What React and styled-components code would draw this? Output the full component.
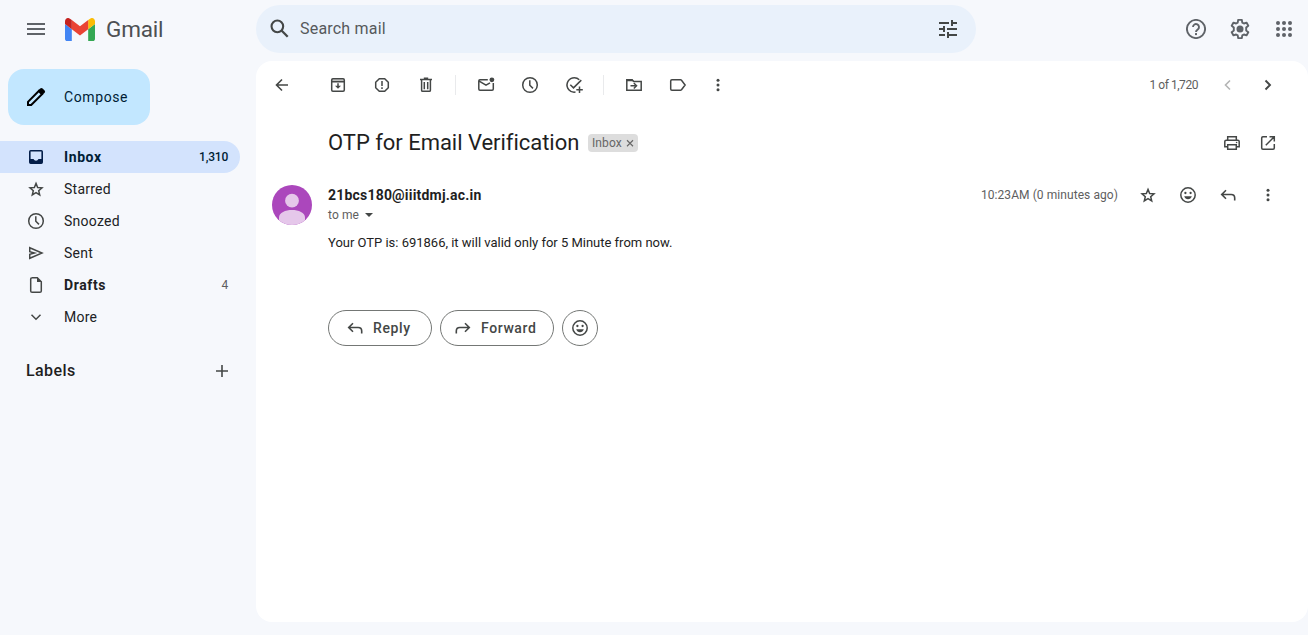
import React from "react";
import styled, { createGlobalStyle } from "styled-components";

const Global = createGlobalStyle`
  *, *::before, *::after { box-sizing: border-box; }
  body { margin: 0; background: #f6f8fc; font-family: Roboto, "Liberation Sans", sans-serif; color: #1f1f1f; overflow: hidden; }
  button { font: inherit; color: inherit; background: none; border: 0; padding: 0; margin: 0; }
  h1, p { margin: 0; font-weight: 400; }
`;

const Page = styled.div`
  display: grid;
  grid-template: 61px 561px 13px / 256px 1fr;
  width: 1308px;
  height: 635px;
`;

const Header = styled.header`
  grid-column: 1 / 3;
  display: flex;
  align-items: center;
  height: 58px;
`;

const Brand = styled.div`
  width: 256px;
  padding-left: 24px;
  display: flex;
  align-items: center;
`;

const BrandName = styled.span`
  margin-left: 11px;
  font-size: 22.5px;
  line-height: 28px;
  letter-spacing: -0.2px;
  color: #4d5053;
`;

const LogoSvg = styled.svg`
  display: block;
  margin-left: 17px;
`;

const Search = styled.div`
  width: 720px;
  height: 48px;
  padding: 0 16px 0 12px;
  border-radius: 24px;
  background: #e9f1fb;
  display: flex;
  align-items: center;
`;

const SearchText = styled.span`
  flex: 1;
  margin-left: 8px;
  padding-bottom: 1px;
  font-size: 16px;
  letter-spacing: 0.2px;
  color: #56595c;
`;

const HeaderActions = styled.div`
  margin-left: auto;
  padding-right: 12px;
  display: flex;
  gap: 20px;
`;

const IconButton = styled.button`
  flex: none;
  display: flex;
  align-items: center;
  justify-content: center;
  width: ${(p) => p.$size || 20}px;
  height: ${(p) => p.$size || 20}px;
  color: ${(p) => p.$color || "#444746"};
`;

const IconSvg = styled.svg`
  display: block;
  flex: none;
  fill: none;
  stroke: currentColor;
`;

const Sidebar = styled.aside`
  padding-top: 8px;
`;

const Compose = styled.button`
  display: flex;
  align-items: center;
  width: 142px;
  height: 56px;
  margin-left: 8px;
  padding-left: 16px;
  gap: 16px;
  border-radius: 16px;
  background: #c2e7ff;
  color: #001d35;
  font-size: 14px;
  font-weight: 400;
  letter-spacing: 0.6px;
`;

const Nav = styled.nav`
  margin-top: 16px;
  width: 240px;
`;

const NavItem = styled.div`
  display: flex;
  align-items: center;
  height: 32px;
  padding: 0 12px 0 26px;
  border-radius: 0 16px 16px 0;
  background: ${(p) => (p.$active ? "#d3e3fd" : "transparent")};
  color: ${(p) => (p.$active ? "#001d35" : "#202124")};
  font-size: 14px;
  font-weight: ${(p) => (p.$bold ? 700 : 400)};
`;

const NavLabel = styled.span`
  flex: 1;
  margin-left: 18px;
  letter-spacing: ${(p) => (p.$bold ? 0.6 : 0.25)}px;
`;

const NavCount = styled.span`
  font-size: 12px;
  font-weight: ${(p) => (p.$active ? 500 : 400)};
  letter-spacing: -0.2px;
  color: ${(p) => (p.$active ? "#001d35" : "#5e5e5e")};
`;

const LabelsHead = styled.div`
  display: flex;
  align-items: center;
  justify-content: space-between;
  width: 232px;
  margin-top: 26px;
  height: 24px;
  padding-left: 26px;
  font-size: 16px;
  font-weight: 500;
  letter-spacing: 0.4px;
`;

const LabelsTitle = styled.span`
  padding-bottom: 1px;
`;

const Panel = styled.main`
  background: #fff;
  border-radius: 16px;
`;

const Toolbar = styled.div`
  display: flex;
  align-items: center;
  height: 48px;
  padding: 0 30px 0 16px;
`;

const ToolGroup = styled.div`
  display: flex;
  gap: 24px;
  margin-left: ${(p) => p.$left || 0}px;
`;

const Separator = styled.i`
  width: 1px;
  height: 20px;
  margin: 0 20px 0 19px;
  background: #e9eaec;
`;

const Pager = styled.div`
  display: flex;
  align-items: center;
  gap: 20px;
  margin-left: auto;
  font-size: 12px;
  letter-spacing: -0.45px;
  color: #5e5e5e;
`;

const SubjectRow = styled.div`
  display: flex;
  align-items: center;
  height: 36px;
  margin-top: 16px;
  padding: 0 30px 0 72px;
`;

const Subject = styled.h1`
  width: 250px;
  font-size: 22px;
  line-height: 28px;
  letter-spacing: -0.03px;
  white-space: nowrap;
`;

const Chip = styled.span`
  display: flex;
  align-items: center;
  justify-content: space-between;
  width: 50px;
  height: 18px;
  margin-left: 10px;
  padding: 0 3px 0 4px;
  border-radius: 4px;
  background: #ddd;
  color: #666;
  font-size: 12px;
  letter-spacing: 0.1px;
`;

const RowActions = styled.div`
  display: flex;
  gap: ${(p) => p.$gap}px;
  margin-left: ${(p) => (p.$left ? `${p.$left}px` : "auto")};
`;

const Message = styled.section`
  display: flex;
  padding: 24px 30px 0 16px;
`;

const AvatarSvg = styled.svg`
  display: block;
  flex: none;
`;

const MessageMain = styled.div`
  flex: 1;
  margin-left: 16px;
`;

const SenderRow = styled.div`
  display: flex;
  align-items: center;
  height: 20px;
`;

const Sender = styled.span`
  font-size: 14px;
  font-weight: 700;
  letter-spacing: 0.2px;
`;

const SentAt = styled.span`
  margin-left: auto;
  font-size: 12px;
  letter-spacing: 0.07px;
  color: #5e5e5e;
`;

const Recipient = styled.div`
  display: flex;
  align-items: center;
  gap: 6px;
  height: 20px;
  font-size: 12px;
  letter-spacing: 0.1px;
  color: #5e5e5e;
`;

const Body = styled.p`
  margin-top: 8px;
  font-size: 13px;
  line-height: 20px;
  letter-spacing: -0.01px;
  color: #222;
`;

const Replies = styled.div`
  display: flex;
  gap: 8px;
  margin-top: 57px;
`;

const Pill = styled.button`
  display: flex;
  align-items: center;
  justify-content: ${(p) => (p.$round ? "center" : "flex-start")};
  gap: 8px;
  width: ${(p) => p.$width}px;
  height: 36px;
  padding-left: ${(p) => p.$pad || 0}px;
  border: 1px solid #747775;
  border-radius: 18px;
  color: #444746;
  font-size: 14px;
  font-weight: 500;
  letter-spacing: 0.6px;
`;

const dots = (points, r) =>
  points.map(([x, y]) => <circle key={`${x}-${y}`} cx={x} cy={y} r={r} fill="currentColor" stroke="none" />);

const clock = (
  <>
    <circle cx="10" cy="10" r="7.3" />
    <path d="M9.8 5.2V10.200L13 13.400" />
  </>
);

const smile = (
  <>
    <circle cx="10" cy="10" r="7.2" />
    {dots([[7.4, 8], [12.6, 8]], 1.15)}
    <path d="M6.200 11.300h7.600c-.6 1.900-2 2.900-3.800 2.900s-3.200-1-3.800-2.900z" fill="currentColor" stroke="none" />
  </>
);

const glyphs = {
  menu: <path d="M2.500 5.830h15M2.500 10h15M2.500 14.170h15" strokeWidth="1.670" />,
  search: (
    <>
      <circle cx="7.600" cy="7.600" r="5.300" strokeWidth="1.900" />
      <path d="M11.400 11.400L17 17" strokeWidth="2.100" />
    </>
  ),
  tune: <path d="M1 4h10M13 4h6M14 1v6M1 10h5M9 10h10M6 7v6M1 16h6M9 16h10M10 13v6" strokeWidth="2" />,
  help: (
    <>
      <circle cx="10" cy="10" r="9.100" strokeWidth="1.900" />
      <path d="M7 8a3 3 0 1 1 4.800 2.400C10.600 11.300 10 11.700 10 13" strokeWidth="1.900" />
      <rect x="9" y="14.100" width="2" height="2" fill="currentColor" stroke="none" />
    </>
  ),
  gear: (
    <>
      <path
        d="M8.200.9h3.600l.5 2.700 1.600.9 2.600-.9 1.800 3.100-2.100 1.800v3l2.100 1.800-1.800 3.100-2.600-.9-1.600.9-.5 2.700H8.200l-.5-2.700-1.600-.9-2.600.9-1.800-3.100 2.100-1.800v-3L1.700 6.700l1.800-3.100 2.600.9 1.600-.9z"
        strokeWidth="1.900"
        strokeLinejoin="round"
      />
      <circle cx="10" cy="10" r="3.500" fill="currentColor" stroke="none" />
    </>
  ),
  apps: dots([4, 10, 16].flatMap((y) => [4, 10, 16].map((x) => [x, y])), 2),
  pencil: (
    <>
      <path d="M2 18v-3.200L12.800 4l3.200 3.200L5.200 18z" strokeWidth="2" />
      <path d="M12 3.600L14.200 1.400q1.200-1 2.400 0l2 2q1 1.200 0 2.400L16.400 8z" fill="currentColor" stroke="none" />
    </>
  ),
  inbox: (
    <path
      d="M4.700 3h10.600Q17 3 17 4.700v10.600q0 1.700-1.700 1.700H4.700Q3 17 3 15.300V4.700Q3 3 4.700 3zM4.600 4.600v7.400H7.500q.8 1.800 2.500 1.800t2.500-1.800h2.900V4.600z"
      fill="currentColor"
      fillRule="evenodd"
      stroke="none"
    />
  ),
  star: <path d="M10 4.400l1.650 4.050 4.350.35-3.300 2.850 1 4.250L10 13.650 6.300 15.900l1-4.250L4 8.800l4.350-.35z" strokeWidth="1.500" />,
  clock,
  send: <path d="M3.750 4.700L16 10 3.750 15.300V11.300L8.500 10 3.750 8.700z" />,
  file: (
    <>
      <path d="M5.600 2.700h5.700l4 4v9.200q0 1.400-1.400 1.400H6.100q-1.400 0-1.400-1.400V4.100q0-1.400 1.400-1.400z" />
      <path d="M11 2.500v4.500h4.700z" fill="currentColor" stroke="none" />
    </>
  ),
  down: <path d="M5.500 7.800l4.500 4.500 4.500-4.500" />,
  plus: <path d="M10 4v12M4 10h12" strokeWidth="1.600" />,
  back: <path d="M16 10H5M10 4.500L4.500 10l5.500 5.500" strokeWidth="1.600" />,
  archive: (
    <>
      <path d="M3.700 6.200v8.900q0 1.200 1.200 1.200h10.200q1.200 0 1.200-1.200V6.200M3.700 6.700V4.900q0-1.200 1.200-1.200h10.200q1.200 0 1.200 1.200v1.800z" />
      <path d="M4 4.500h12v2H4z" fill="currentColor" fillOpacity=".35" stroke="none" />
      <path d="M10 8.300v3" />
      <path d="M7 10.700h6L10 13.700z" fill="currentColor" stroke="none" />
    </>
  ),
  report: (
    <>
      <path d="M7.300 3.700h5.400l3.600 3.600v5.400l-3.600 3.600H7.300l-3.600-3.600V7.300z" />
      <path d="M10 6v5M10 12.300v1.700" />
    </>
  ),
  trash: (
    <>
      <path d="M4 4.500h12M7.800 3.300h4.400M5.600 5v10.200q0 1.100 1.100 1.100h6.600q1.100 0 1.100-1.100V5" />
      <path d="M8.300 7v7.200M11.700 7v7.200" />
    </>
  ),
  unread: (
    <>
      <path d="M11.800 4.800H3.900q-1.100 0-1.100 1.100v8.200q0 1.200 1.200 1.200h12.100q1.200 0 1.200-1.200V8M3.200 6.200L10 10.200l4-2.400" />
      <circle cx="15.900" cy="4.800" r="2.400" fill="currentColor" stroke="none" />
    </>
  ),
  task: <path d="M15.300 4.800A7.200 7.200 0 1 0 11.500 17M6.300 9.700l3.200 3.200L17.300 5.100M15.500 11.500v6.500M12.300 14.700h6.500" />,
  move: (
    <>
      <path d="M2.800 15.300V4.800h5.200l1.700 1.700h7.500v8.800z" />
      <path d="M2.500 4h5.600l2 2.200H2.500z" fill="currentColor" stroke="none" />
      <path d="M6.500 10.800h5M9.800 8l2.800 2.800-2.800 2.800" strokeWidth="1.400" />
    </>
  ),
  label: <path d="M3.900 4.800h8.600q.6 0 1 .5l3.600 4.700-3.600 4.700q-.4.600-1 .6H3.900q-1.200 0-1.200-1.200V6q0-1.200 1.200-1.200z" />,
  more: dots([[10, 5.300], [10, 10], [10, 14.700]], 1.500),
  left: <path d="M12 5.500L7.500 10l4.500 4.500" strokeWidth="1.600" />,
  right: <path d="M7.500 5.500L12 10l-4.500 4.500" strokeWidth="1.900" />,
  print: (
    <>
      <path d="M5.700 7V3.700h8.600V7M5.700 13.700H2.800V8.600q0-1.400 1.400-1.400h11.600q1.400 0 1.400 1.400v5.100h-2.900M5.700 11.700h8.600v4.600H5.700z" />
      <circle cx="14.600" cy="9.500" r=".8" fill="currentColor" stroke="none" />
    </>
  ),
  open: <path d="M9 3.700H4.900q-1.200 0-1.200 1.200v10.200q0 1.200 1.200 1.200h10.200q1.200 0 1.200-1.200V11M11.500 3.700h4.800v4.800M16 4L7.800 12.200" />,
  smile,
  reply: <path d="M16.700 15.500v-2.500q0-3.500-3.500-3.500H4.300M8 5.200L3.700 9.500 8 13.800" strokeWidth="1.600" />,
  forward: <path d="M3.300 15.500v-2.500q0-3.500 3.500-3.500h8.900M12 5.200l4.300 4.300L12 13.800" strokeWidth="1.600" />,
  close: <path d="M4 4.500l12 12M16 4.500l-12 12" strokeWidth="2.200" />,
};

const Icon = ({ name, size = 20, color }) => (
  <IconSvg width={size} height={size} viewBox="0 0 20 20" strokeWidth="1.500" color={color}>
    {glyphs[name]}
  </IconSvg>
);

const Tool = ({ name, color, slot }) => (
  <IconButton aria-label={name} $color={color} $size={slot}>
    <Icon name={name} />
  </IconButton>
);

const Logo = () => (
  <LogoSvg width="30" height="23" viewBox="52 42 88 66" preserveAspectRatio="none">
    <path fill="#4285f4" d="M58 108h14V74L52 59v43c0 3.320 2.690 6 6 6" />
    <path fill="#34a853" d="M120 108h14c3.320 0 6-2.690 6-6V59l-20 15" />
    <path fill="#fbbc04" d="M120 48v26l20-15v-8c0-7.420-8.470-11.650-14.400-7.200" />
    <path fill="#ea4335" d="M72 74V48l24 18 24-18v26L96 92" />
    <path fill="#c5221f" d="M52 51v8l20 15V48l-5.600-4.200c-5.940-4.450-14.400-.220-14.400 7.200" />
  </LogoSvg>
);

const Avatar = () => (
  <AvatarSvg width="40" height="40" viewBox="0 0 40 40">
    <circle cx="20" cy="20" r="20" fill="#ab47bc" />
    <circle cx="20" cy="15.700" r="6.900" fill="#e5c7ea" />
    <path fill="#e5c7ea" d="M7 35.200V32.500C7 27.500 13.500 25 20 25s13 2.500 13 7.500v2.700A20 20 0 0 1 7 35.200z" />
  </AvatarSvg>
);

const folders = [
  { icon: "inbox", label: "Inbox", count: "1,310", active: true, bold: true },
  { icon: "star", label: "Starred" },
  { icon: "clock", label: "Snoozed" },
  { icon: "send", label: "Sent" },
  { icon: "file", label: "Drafts", count: "4", bold: true },
  { icon: "down", label: "More" },
];

export default function App() {
  return (
    <Page>
      <Global />
      <Header>
        <Brand>
          <IconButton aria-label="menu" $size={24} $color="#5f6368">
            <Icon name="menu" size={24} />
          </IconButton>
          <Logo />
          <BrandName>Gmail</BrandName>
        </Brand>
        <Search>
          <IconButton aria-label="search" $size={24}>
            <Icon name="search" size={22} />
          </IconButton>
          <SearchText>Search mail</SearchText>
          <Tool name="tune" slot={24} />
        </Search>
        <HeaderActions>
          <Tool name="help" color="#5f6368" slot={24} />
          <Tool name="gear" color="#5f6368" slot={24} />
          <Tool name="apps" color="#5f6368" slot={24} />
        </HeaderActions>
      </Header>

      <Sidebar>
        <Compose>
          <IconButton as="span" $size={24} $color="#000">
            <Icon name="pencil" />
          </IconButton>
          Compose
        </Compose>
        <Nav>
          {folders.map((f) => (
            <NavItem key={f.label} $active={f.active} $bold={f.bold}>
              <Icon name={f.icon} color={f.active ? "#041e49" : "#444746"} />
              <NavLabel $bold={f.bold}>{f.label}</NavLabel>
              {f.count && <NavCount $active={f.active}>{f.count}</NavCount>}
            </NavItem>
          ))}
        </Nav>
        <LabelsHead>
          <LabelsTitle>Labels</LabelsTitle>
          <Icon name="plus" color="#444746" />
        </LabelsHead>
      </Sidebar>

      <Panel>
        <Toolbar>
          <Tool name="back" />
          <ToolGroup $left={36}>
            <Tool name="archive" />
            <Tool name="report" />
            <Tool name="trash" />
          </ToolGroup>
          <Separator />
          <ToolGroup>
            <Tool name="unread" />
            <Tool name="clock" />
            <Tool name="task" />
          </ToolGroup>
          <Separator />
          <ToolGroup>
            <Tool name="move" />
            <Tool name="label" />
          </ToolGroup>
          <ToolGroup $left={20}>
            <Tool name="more" />
          </ToolGroup>
          <Pager>
            1 of 1,720
            <Tool name="left" color="#b4b5b5" />
            <Tool name="right" />
          </Pager>
        </Toolbar>

        <SubjectRow>
          <Subject>OTP for Email Verification</Subject>
          <Chip>
            Inbox
            <Icon name="close" size={10} />
          </Chip>
          <RowActions $gap={16}>
            <Tool name="print" />
            <Tool name="open" />
          </RowActions>
        </SubjectRow>

        <Message>
          <Avatar />
          <MessageMain>
            <SenderRow>
              <Sender>21bcs180@iiitdmj.ac.in</Sender>
              <SentAt>10:23AM (0 minutes ago)</SentAt>
              <RowActions $gap={20} $left={20}>
                <Tool name="star" />
                <Tool name="smile" />
                <Tool name="reply" />
                <Tool name="more" />
              </RowActions>
            </SenderRow>
            <Recipient>
              to me
              <svg width="8" height="4" viewBox="0 0 8 4">
                <path d="M0 0h8L4 4z" fill="#444746" />
              </svg>
            </Recipient>
            <Body>Your OTP is: 691866, it will valid only for 5 Minute from now.</Body>
            <Replies>
              <Pill $width={104} $pad={16}>
                <Icon name="reply" />
                Reply
              </Pill>
              <Pill $width={114} $pad={12}>
                <Icon name="forward" />
                Forward
              </Pill>
              <Pill $width={36} $round aria-label="emoji">
                <Icon name="smile" />
              </Pill>
            </Replies>
          </MessageMain>
        </Message>
      </Panel>
    </Page>
  );
}
